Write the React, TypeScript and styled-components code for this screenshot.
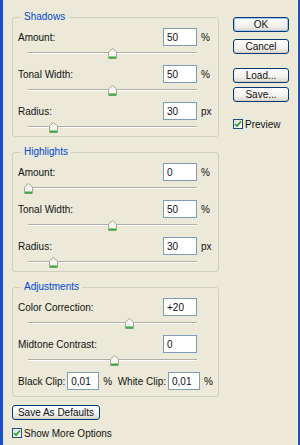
import React from "react";
import styled, { createGlobalStyle } from "styled-components";

const GlobalStyle = createGlobalStyle`
  body {
    margin: 0;
    background: #ece9d8;
    font-family: "Liberation Sans", Arial, sans-serif;
    font-size: 10px;
    color: #111;
  }
`;

type Item = { label: string; value: string; unit?: string; pos?: number };
type Group = { title: string; items: Item[] };

const groups: Group[] = [
  {
    title: "Shadows",
    items: [
      { label: "Amount:", value: "50", unit: "%", pos: 50 },
      { label: "Tonal Width:", value: "50", unit: "%", pos: 50 },
      { label: "Radius:", value: "30", unit: "px", pos: 15 },
    ],
  },
  {
    title: "Highlights",
    items: [
      { label: "Amount:", value: "0", unit: "%", pos: 0 },
      { label: "Tonal Width:", value: "50", unit: "%", pos: 50 },
      { label: "Radius:", value: "30", unit: "px", pos: 15 },
    ],
  },
];

const adjustments: Item[] = [
  { label: "Color Correction:", value: "+20", pos: 60 },
  { label: "Midtone Contrast:", value: "0", pos: 51 },
];

const Frame = styled.div`
  width: 300px;
  height: 445px;
  box-sizing: border-box;
  display: flex;
  background: #ece9d8;
  border-left: 3px solid #1d4fcb;
  border-right: 2px solid #1f4fbf;
  box-shadow: inset -1px 0 0 #f7f6f0;
  overflow: hidden;
`;

const LeftCol = styled.div`
  width: 207px;
  margin-left: 9px;
  padding-top: 11px;
  display: flex;
  flex-direction: column;
`;

const RightCol = styled.div`
  width: 56px;
  margin-left: 14px;
  padding-top: 17px;
  display: flex;
  flex-direction: column;
`;

const Group = styled.fieldset<{ $gap?: number }>`
  margin: 0 0 ${(p) => p.$gap ?? 9}px 0;
  padding: 5px 2px 1px 5px;
  min-width: 0;
  border: 1px solid #d0d0bf;
  border-radius: 3px;
`;

const Legend = styled.legend`
  padding: 0 3px;
  margin-left: 3px;
  line-height: 12px;
  color: #0046d5;
`;

const Row = styled.div`
  display: flex;
  align-items: center;
  height: 18px;
`;

const Label = styled.span<{ $grow?: boolean }>`
  flex: ${(p) => (p.$grow ? 1 : "none")};
  white-space: nowrap;
`;

const Input = styled.input`
  width: 34px;
  height: 18px;
  box-sizing: border-box;
  margin: 0 0 0 3px;
  padding: 0 3px;
  border: 1px solid #7f9db9;
  background: #fff;
  font-family: "Liberation Sans", Arial, sans-serif;
  font-size: 10px;
  color: #111;
  outline: none;
`;

const Unit = styled.span<{ $w?: number }>`
  width: ${(p) => p.$w ?? 15}px;
  margin-left: 4px;
  white-space: nowrap;
`;

const Slider = styled.div<{ $last?: boolean }>`
  position: relative;
  box-sizing: border-box;
  height: 15px;
  padding-top: 6px;
  margin: 0 19px ${(p) => (p.$last ? 0 : 4)}px 10px;
`;

const Track = styled.div`
  height: 0;
  border-top: 1px solid #aeada6;
  border-bottom: 1px solid #ffffff;
`;

const Thumb = styled.svg`
  position: absolute;
  top: 2px;
  width: 9px;
  height: 11px;
`;

const Button = styled.button<{ $default?: boolean; $w?: number; $mt?: number }>`
  width: ${(p) => (p.$w ? `${p.$w}px` : "100%")};
  height: 15px;
  margin: ${(p) => p.$mt ?? 0}px 0 0 0;
  padding: 0;
  box-sizing: border-box;
  border: 1px solid #003c74;
  border-radius: 3px;
  background: linear-gradient(#ffffff, #f2f1ec 60%, #dcd8cd);
  box-shadow: ${(p) =>
    p.$default ? "inset 0 0 0 1px #a8c4f2" : "inset 0 -1px 0 #d6d0c5"};
  font-family: "Liberation Sans", Arial, sans-serif;
  font-size: 10px;
  line-height: 13px;
  color: #111;
`;

const CheckRow = styled.label<{ $mt: number }>`
  display: flex;
  align-items: center;
  margin-top: ${(p) => p.$mt}px;
  height: 12px;
  gap: 2px;
`;

const Box = styled.span`
  width: 10px;
  height: 10px;
  box-sizing: border-box;
  border: 1px solid #1c5180;
  background: linear-gradient(135deg, #e0e0d8, #ffffff);
  display: flex;
  align-items: center;
  justify-content: center;
`;

const ClipRow = styled(Row)`
  margin-bottom: 5px;

  ${Input} {
    width: 32px;
    margin-left: 2px;
  }
`;

const Spacer = styled.span`
  flex: 1;
`;

function SliderBar({ pos, last }: { pos: number; last?: boolean }) {
  return (
    <Slider $last={last}>
      <Track />
      <Thumb viewBox="0 0 9 11" style={{ left: `calc(${pos}% - 4.5px)` }}>
        <path
          d="M0.5 4 L4.5 0.5 L8.5 4 L8.5 10.5 L0.5 10.5 Z"
          fill="#f6f5f0"
          stroke="#9fa89b"
        />
        <rect x="1" y="8.5" width="7" height="2" fill="#3aaa3a" />
      </Thumb>
    </Slider>
  );
}

function Check() {
  return (
    <Box>
      <svg width="8" height="8" viewBox="0 0 8 8">
        <path d="M1 4 L3 6 L7 1.5" fill="none" stroke="#21a121" strokeWidth="1.6" />
      </svg>
    </Box>
  );
}

function Field({ item, last }: { item: Item; last?: boolean }) {
  return (
    <>
      <Row>
        <Label $grow>{item.label}</Label>
        <Input readOnly value={item.value} />
        <Unit>{item.unit ?? ""}</Unit>
      </Row>
      {item.pos !== undefined && <SliderBar pos={item.pos} last={last} />}
    </>
  );
}

export default function App() {
  return (
    <>
      <GlobalStyle />
      <Frame>
        <LeftCol>
          {groups.map((g) => (
            <Group key={g.title}>
              <Legend>{g.title}</Legend>
              {g.items.map((it, i) => (
                <Field key={it.label} item={it} last={i === g.items.length - 1} />
              ))}
            </Group>
          ))}
          <Group $gap={8}>
            <Legend>Adjustments</Legend>
            {adjustments.map((it) => (
              <Field key={it.label} item={it} />
            ))}
            <ClipRow>
              <Label>Black Clip:</Label>
              <Input readOnly value="0,01" />
              <Unit $w={8}>%</Unit>
              <Spacer />
              <Label>White Clip:</Label>
              <Input readOnly value="0,01" />
              <Unit $w={12}>%</Unit>
            </ClipRow>
          </Group>
          <Button $w={88}>Save As Defaults</Button>
          <CheckRow $mt={7}>
            <Check />
            <span>Show More Options</span>
          </CheckRow>
        </LeftCol>
        <RightCol>
          <Button $default>OK</Button>
          <Button $mt={7}>Cancel</Button>
          <Button $mt={14}>Load...</Button>
          <Button $mt={4}>Save...</Button>
          <CheckRow $mt={16}>
            <Check />
            <span>Preview</span>
          </CheckRow>
        </RightCol>
      </Frame>
    </>
  );
}
